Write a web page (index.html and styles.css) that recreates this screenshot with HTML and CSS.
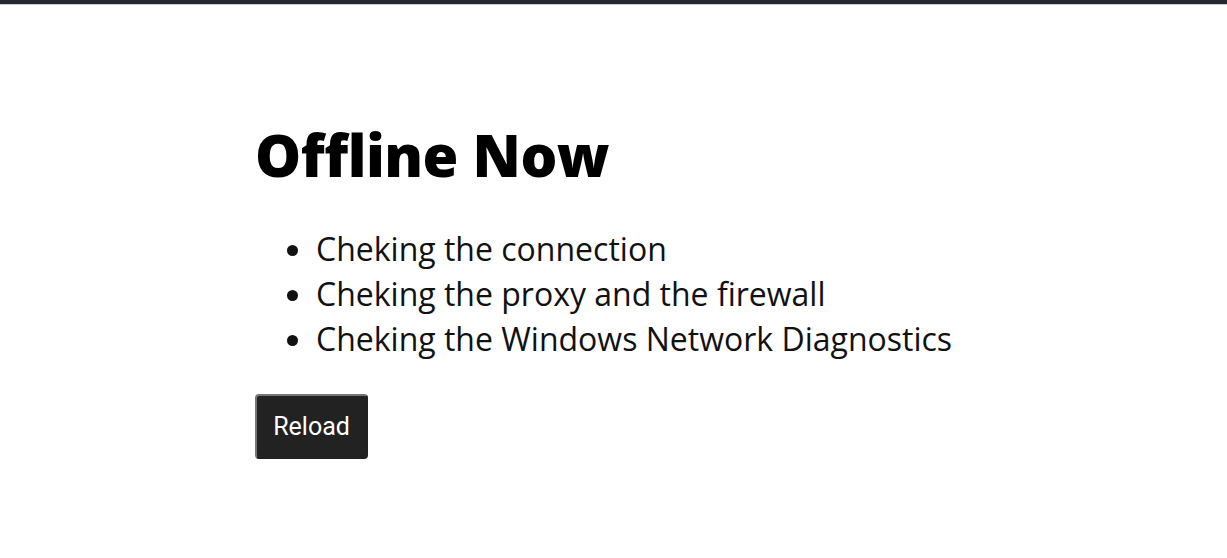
FILE: index.html
```html
<!DOCTYPE html>
<html lang="en">
<head>
<meta charset="utf-8">
<title>Offline Now</title>
<link rel="stylesheet" href="styles.css">
</head>
<body>
<div class="topbar"></div>
<main class="offline">
  <h1 class="title">Offline Now</h1>
  <ul class="checks">
    <li>Cheking the connection</li>
    <li>Cheking the proxy and the firewall</li>
    <li>Cheking the Windows Network Diagnostics</li>
  </ul>
  <button class="reload">Reload</button>
</main>
</body>
</html>
```
FILE: styles.css
```css
html, body {
  margin: 0;
  padding: 0;
  background: #fff;
}
body {
  font-family: "Open Sans", sans-serif;
  color: #111;
}
.topbar {
  height: 4px;
  background: #22272d;
  border-bottom: 1px solid #c9ccd1;
}
.offline {
  padding: 110px 0 0 257px;
}
.title {
  margin: 0 0 0 -2px;
  font-family: "Open Sans", sans-serif;
  font-weight: 800;
  font-size: 58px;
  line-height: 80px;
  color: #000;
  letter-spacing: -0.5px;
}
.checks {
  margin: 31px 0 0 0;
  padding-left: 59px;
  font-size: 32px;
  line-height: 45px;
}
.reload {
  margin-top: 33px;
  margin-left: -2px;
  width: 113px;
  height: 65px;
  background: #222;
  color: #fff;
  border: 2px outset #767676;
  border-radius: 4px;
  font-family: Roboto, sans-serif;
  font-size: 25px;
  padding: 0;
}
```
